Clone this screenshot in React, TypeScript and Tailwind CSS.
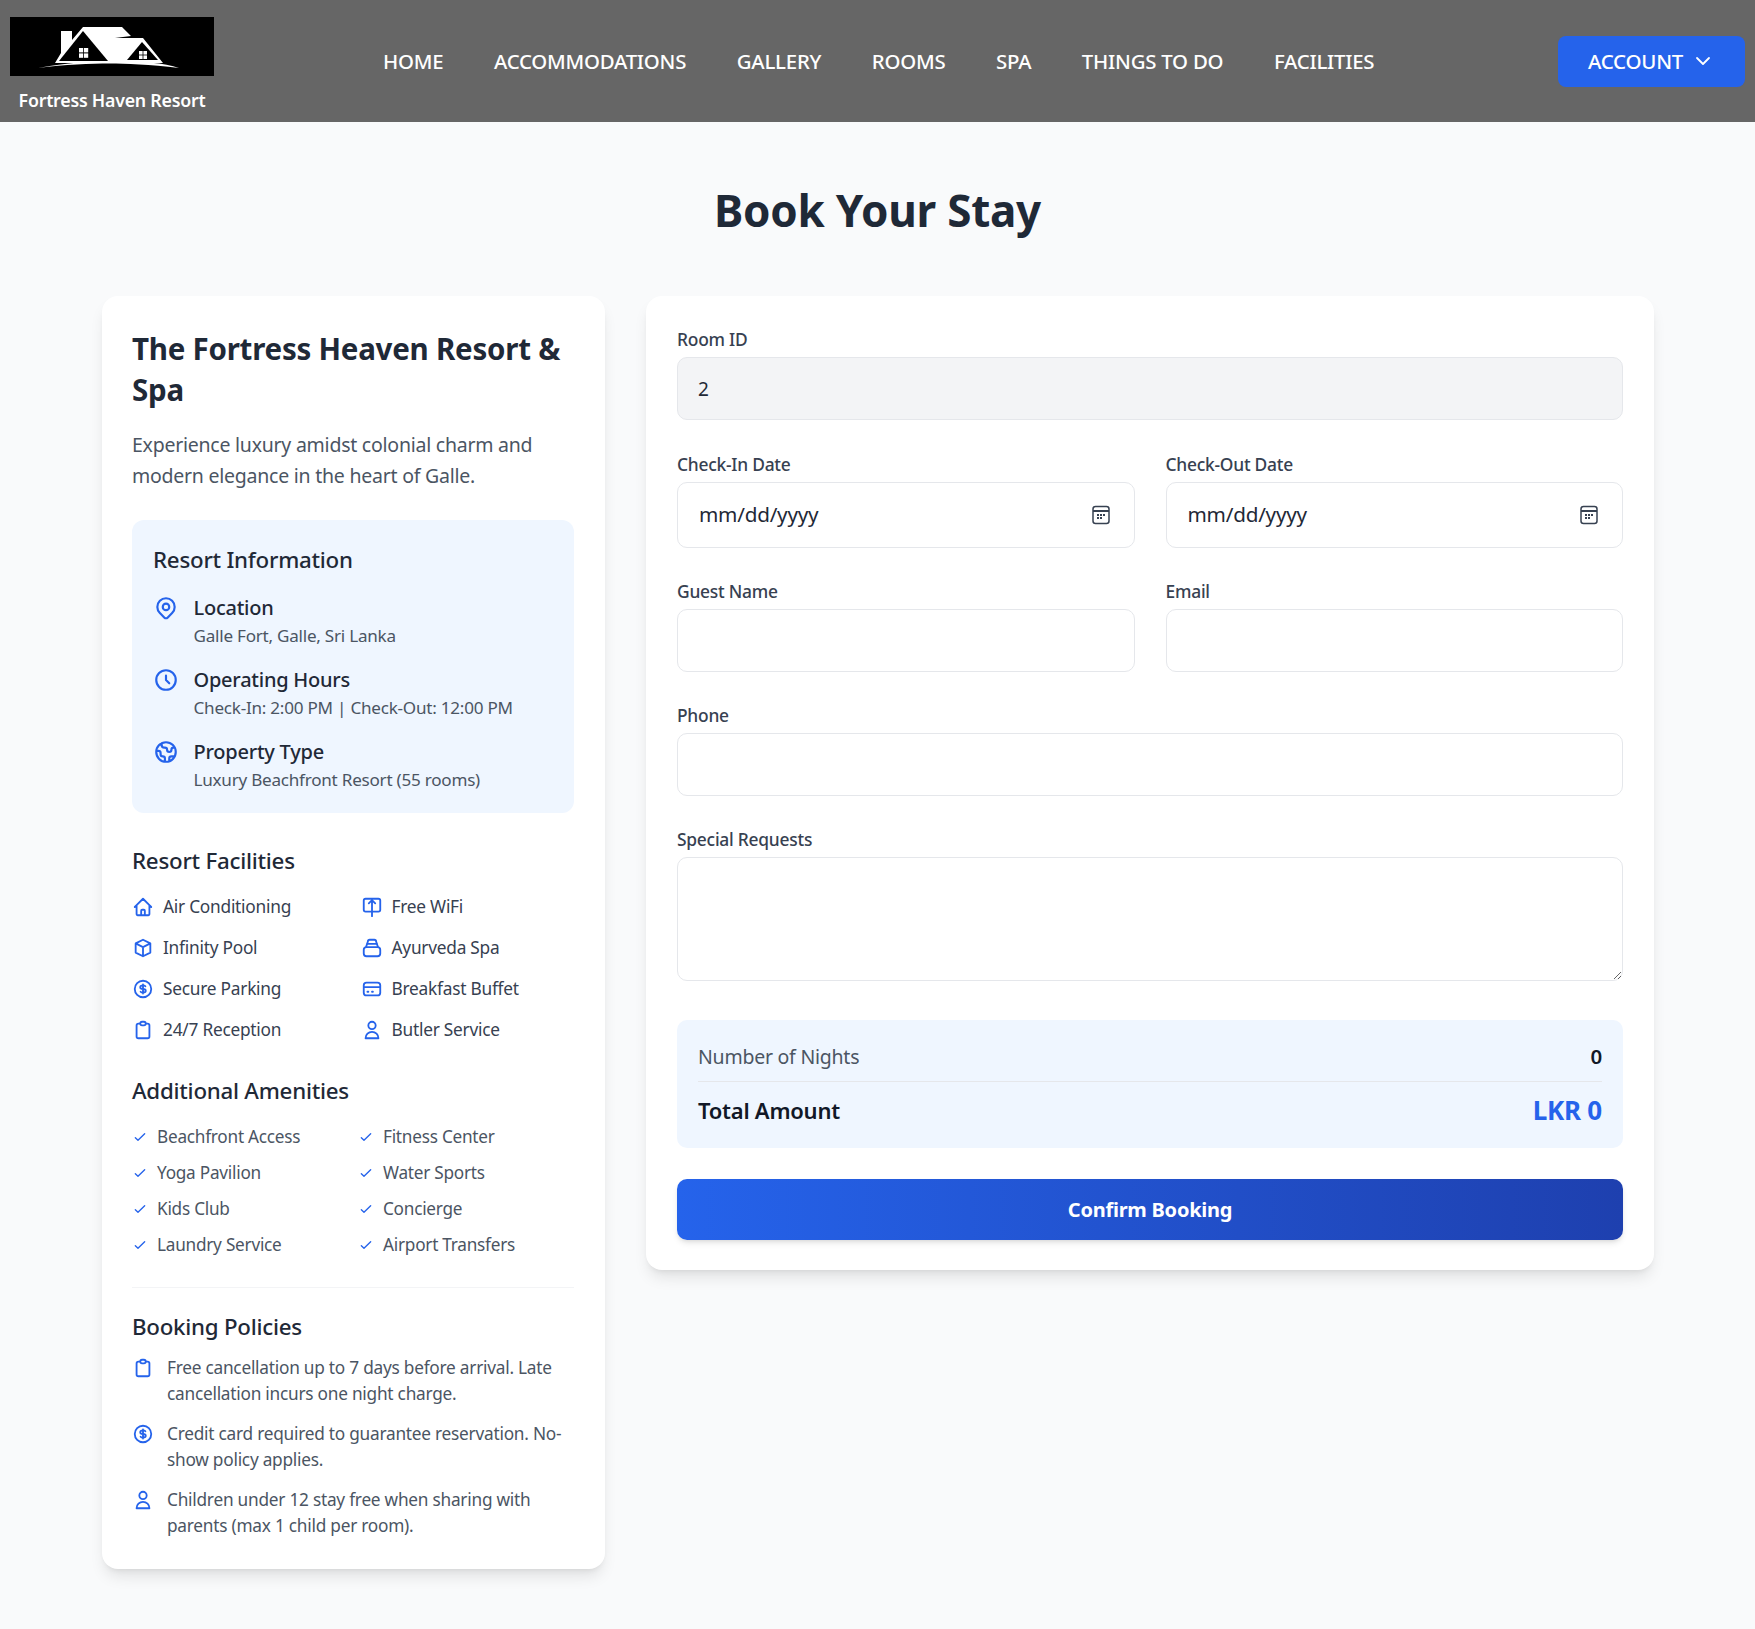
import React from 'react';
import { ChevronDown } from 'lucide-react';
import {
  HiOutlineLocationMarker,
  HiOutlineClock,
  HiOutlineGlobe,
  HiOutlineHome,
  HiOutlineCube,
  HiOutlineCurrencyDollar,
  HiOutlineClipboard,
  HiOutlineUser,
  HiOutlineCheck,
  HiOutlineCreditCard,
} from 'react-icons/hi';

function WifiBoxIcon({ className }: { className?: string }) {
  return (
    <svg viewBox="0 0 24 24" fill="none" stroke="currentColor" strokeWidth={2} strokeLinecap="round" strokeLinejoin="round" className={className}>
      <rect x="3" y="3" width="18" height="14" rx="2" />
      <path d="M12 22V4M8.5 8 12 4.5 15.5 8" />
    </svg>
  );
}

function SpaIcon({ className }: { className?: string }) {
  return (
    <svg viewBox="0 0 24 24" fill="none" stroke="currentColor" strokeWidth={2} strokeLinecap="round" strokeLinejoin="round" className={className}>
      <path d="M5.5 11 7.5 5a2 2 0 0 1 2-2h5a2 2 0 0 1 2 2l2 6" />
      <path d="M7 7.5h10" />
      <rect x="3" y="11" width="18" height="10" rx="3" />
    </svg>
  );
}

function CalendarIcon() {
  return (
    <svg viewBox="0 0 20 20" className="w-5 h-5 text-[#374151]" fill="none" stroke="currentColor" strokeWidth={1.5}>
      <rect x="2" y="1.5" width="16" height="17" rx="2.5" />
      <path d="M2 6h16" strokeWidth={2} />
      <g fill="currentColor" stroke="none">
        <rect x="6" y="9" width="2" height="2" />
        <rect x="9" y="9" width="2" height="2" />
        <rect x="12" y="9" width="2" height="2" />
        <rect x="6" y="12" width="2" height="2" />
        <rect x="9" y="12" width="2" height="2" />
      </g>
    </svg>
  );
}

function Logo() {
  return (
    <div className="w-[204px] h-[59px] bg-black">
      <svg viewBox="0 0 204 59" className="w-[204px] h-[59px]">
        {/* house body */}
        <path d="M45 46 51 36V14H62V23L73 10H112L121 19 105 21H133L153 46Z" fill="#fff" />
        {/* gables */}
        <path d="M73 14 49 44H98Z" fill="#000" />
        <path d="M132 25 117 43H148Z" fill="#000" />
        {/* windows */}
        <g fill="#fff">
          <rect x="69" y="31" width="4.2" height="4.4" />
          <rect x="74" y="31" width="4.2" height="4.4" />
          <rect x="69" y="36.4" width="4.2" height="4.4" />
          <rect x="74" y="36.4" width="4.2" height="4.4" />
          <rect x="129" y="34" width="3.6" height="3.6" />
          <rect x="133.4" y="34" width="3.6" height="3.6" />
          <rect x="129" y="38.4" width="3.6" height="3.6" />
          <rect x="133.4" y="38.4" width="3.6" height="3.6" />
        </g>
        {/* ground curve */}
        <path d="M28 51C60 45 85 44 105 44C130 44 155 46 169 51C140 47.5 115 46.5 100 46.5C80 46.5 55 47.5 28 51Z" fill="#fff" />
      </svg>
    </div>
  );
}

const navLinks = ['HOME', 'ACCOMMODATIONS', 'GALLERY', 'ROOMS', 'SPA', 'THINGS TO DO', 'FACILITIES'];

const resortInfo = [
  { icon: HiOutlineLocationMarker, title: 'Location', text: 'Galle Fort, Galle, Sri Lanka' },
  { icon: HiOutlineClock, title: 'Operating Hours', text: 'Check-In: 2:00 PM | Check-Out: 12:00 PM' },
  { icon: HiOutlineGlobe, title: 'Property Type', text: 'Luxury Beachfront Resort (55 rooms)' },
];

const facilities = [
  { icon: HiOutlineHome, label: 'Air Conditioning' },
  { icon: WifiBoxIcon, label: 'Free WiFi' },
  { icon: HiOutlineCube, label: 'Infinity Pool' },
  { icon: SpaIcon, label: 'Ayurveda Spa' },
  { icon: HiOutlineCurrencyDollar, label: 'Secure Parking' },
  { icon: HiOutlineCreditCard, label: 'Breakfast Buffet' },
  { icon: HiOutlineClipboard, label: '24/7 Reception' },
  { icon: HiOutlineUser, label: 'Butler Service' },
];

const amenities = [
  'Beachfront Access', 'Fitness Center',
  'Yoga Pavilion', 'Water Sports',
  'Kids Club', 'Concierge',
  'Laundry Service', 'Airport Transfers',
];

const policies = [
  { icon: HiOutlineClipboard, text: 'Free cancellation up to 7 days before arrival. Late cancellation incurs one night charge.' },
  { icon: HiOutlineCurrencyDollar, text: 'Credit card required to guarantee reservation. No-show policy applies.' },
  { icon: HiOutlineUser, text: 'Children under 12 stay free when sharing with parents (max 1 child per room).' },
];

function Field({ label, children, className }: { label: string; children: React.ReactNode; className?: string }) {
  return (
    <div className={className}>
      <label className="block text-[17.4px] leading-[22px] font-medium text-[#374151] mb-[7px]">{label}</label>
      {children}
    </div>
  );
}

const inputCls = 'block w-full h-[63px] rounded-[10px] border border-[#e5e7eb] bg-white px-[20px] text-[19px] text-[#1f2937] outline-none';

function DateField({ label }: { label: string }) {
  return (
    <Field label={label}>
      <div className="flex items-center justify-between h-[66px] rounded-[10px] border border-[#e5e7eb] bg-white pl-[21px] pr-[23px] text-[20.7px] text-[#1f2937]">
        <span>mm/dd/yyyy</span>
        <CalendarIcon />
      </div>
    </Field>
  );
}

export default function App() {
  return (
    <div className="min-h-[1629px] bg-[#f9fafb] font-['Noto_Sans',sans-serif] tracking-[-0.015em]">
      <header className="h-[122px] bg-[#666666] flex items-center justify-between pl-[10px] pr-[10px]">
        <div className="flex flex-col items-center mt-[6px]">
          <Logo />
          <span className="mt-[12px] text-[17.8px] leading-[24px] font-semibold text-white">Fortress Haven Resort</span>
        </div>
        <nav className="flex items-center gap-[50.6px] ml-[169px] mr-auto text-[20.4px] font-medium text-white">
          {navLinks.map((l) => (
            <a key={l}>{l}</a>
          ))}
        </nav>
        <button className="flex items-center justify-center gap-[8px] w-[187px] h-[51px] rounded-[8px] bg-[#2563eb] text-[20.5px] font-medium text-white">
          ACCOUNT
          <ChevronDown className="w-[24px] h-[24px]" strokeWidth={1.8} />
        </button>
      </header>

      <main className="px-[102px] pt-[55px] pb-[60px]">
        <h1 className="text-center text-[44px] leading-[66px] font-bold text-[#1f2937] mb-[53px]">Book Your Stay</h1>
        <div className="grid grid-cols-[503px_1008px] gap-[41px] items-start">
          <aside className="bg-white rounded-[16px] shadow-lg pl-[30px] pr-[31px] pt-[32px] pb-[31px]">
            <h2 className="text-[29.5px] leading-[41px] font-bold text-[#1f2937]">The Fortress Heaven Resort &amp; Spa</h2>
            <p className="mt-[19px] text-[19.5px] leading-[31px] text-[#4b5563]">Experience luxury amidst colonial charm and modern elegance in the heart of Galle.</p>

            <section className="mt-[29px] rounded-[12px] bg-[#eff6ff] pl-[21px] pr-[20px] pt-[24px] pb-[20px]">
              <h3 className="text-[22.3px] leading-[32px] font-medium text-[#1f2937]">Resort Information</h3>
              <div className="mt-[18px] flex flex-col gap-[17px]">
                {resortInfo.map((r) => (
                  <div key={r.title} className="flex gap-[14.5px]">
                    <r.icon className="w-[26px] h-[26px] text-[#2563eb] shrink-0 mt-[1px]" />
                    <div>
                      <div className="text-[20px] leading-[28px] font-medium text-[#1f2937]">{r.title}</div>
                      <div className="text-[17.1px] leading-[27px] text-[#4b5563]">{r.text}</div>
                    </div>
                  </div>
                ))}
              </div>
            </section>

            <h3 className="mt-[32px] text-[22.3px] leading-[32px] font-medium text-[#1f2937]">Resort Facilities</h3>
            <div className="mt-[16px] grid grid-cols-2 gap-x-[15px] gap-y-[13px]">
              {facilities.map((f) => (
                <div key={f.label} className="flex items-center gap-[9px] h-[28px] text-[17.3px] text-[#374151]">
                  <f.icon className="w-[22px] h-[22px] text-[#2563eb] shrink-0" />
                  {f.label}
                </div>
              ))}
            </div>

            <h3 className="mt-[31px] text-[22.3px] leading-[32px] font-medium text-[#1f2937]">Additional Amenities</h3>
            <div className="mt-[17px] grid grid-cols-2 gap-x-[10px] gap-y-[10px]">
              {amenities.map((a) => (
                <div key={a} className="flex items-center gap-[9px] h-[26px] text-[17.2px] text-[#4b5563]">
                  <HiOutlineCheck className="w-[16px] h-[16px] text-[#2563eb] shrink-0" />
                  {a}
                </div>
              ))}
            </div>

            <div className="mt-[29px] pt-[23px] border-t border-[#f3f4f6]">
              <h3 className="text-[22.3px] leading-[32px] font-medium text-[#1f2937]">Booking Policies</h3>
              <div className="mt-[12px] flex flex-col gap-[15px]">
                {policies.map((p, i) => (
                  <div key={i} className="flex gap-[13px]">
                    <p.icon className="w-[22px] h-[22px] text-[#2563eb] shrink-0 mt-[2px]" />
                    <p className="text-[17.25px] leading-[25.5px] text-[#4b5563]">{p.text}</p>
                  </div>
                ))}
              </div>
            </div>
          </aside>

          <section className="bg-white rounded-[16px] shadow-lg px-[31px] pt-[32px] pb-[30px]">
            <Field label="Room ID">
              <div className="flex items-center h-[63px] rounded-[10px] border border-[#e5e7eb] bg-[#f3f4f6] px-[20px] pt-[2px] text-[19px] text-[#1f2937]">2</div>
            </Field>
            <div className="mt-[33px] grid grid-cols-2 gap-[31px]">
              <DateField label="Check-In Date" />
              <DateField label="Check-Out Date" />
            </div>
            <div className="mt-[32px] grid grid-cols-2 gap-[31px]">
              <Field label="Guest Name"><input className={inputCls} /></Field>
              <Field label="Email"><input className={inputCls} /></Field>
            </div>
            <Field label="Phone" className="mt-[32px]"><input className={inputCls} /></Field>
            <Field label="Special Requests" className="mt-[32px]">
              <textarea className="block w-full h-[124px] rounded-[10px] border border-[#e5e7eb] bg-white px-[20px] py-[14px] outline-none" />
            </Field>

            <div className="mt-[39px] rounded-[10px] bg-[#eff6ff] px-[21px] pt-[22px] pb-[14px]">
              <div className="flex items-center justify-between h-[29px] text-[19.5px]">
                <span className="text-[#4b5563]">Number of Nights</span>
                <span className="text-[20.5px] font-semibold text-[#111827]">0</span>
              </div>
              <div className="mt-[10px] border-t border-[#e5e7eb] pt-[4px] flex items-center justify-between h-[53px]">
                <span className="text-[22px] font-semibold text-[#111827]">Total Amount</span>
                <span className="text-[26px] font-bold text-[#2563eb]">LKR 0</span>
              </div>
            </div>

            <button className="mt-[31px] w-full h-[61px] rounded-[10px] bg-gradient-to-r from-[#2563eb] to-[#1e40af] text-[20px] font-bold text-white shadow-md">Confirm Booking</button>
          </section>
        </div>
      </main>
    </div>
  );
}
